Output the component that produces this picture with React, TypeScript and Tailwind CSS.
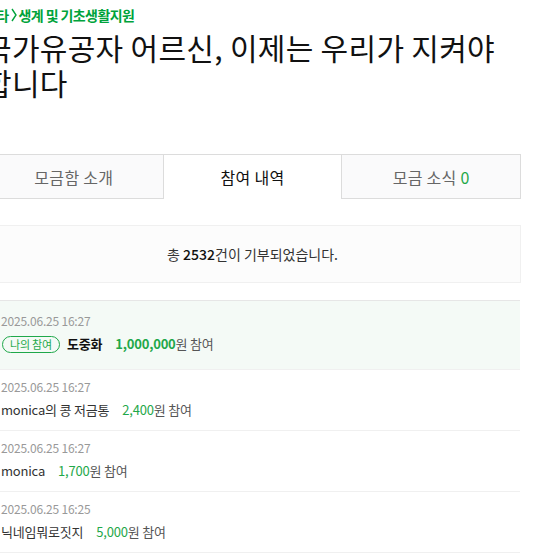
import React from 'react'

const rows = [
  { time: '2025.06.25 16:27', name: '도중화', amount: '1,000,000', mine: true },
  { time: '2025.06.25 16:27', name: 'monica의 콩 저금통', amount: '2,400', mine: false },
  { time: '2025.06.25 16:27', name: 'monica', amount: '1,700', mine: false },
  { time: '2025.06.25 16:25', name: '닉네임뭐로짓지', amount: '5,000', mine: false },
]

function App() {
  return (
    <div className="w-[560px] h-[560px] overflow-hidden bg-white" style={{ fontFamily: '"Noto Sans CJK KR", "Noto Sans", sans-serif' }}>
      <div className="ml-[-16px] w-[537px]">
        {/* breadcrumb */}
        <div className="pt-[5px] flex items-center text-[14px] leading-[20px] font-bold text-[#00a33b] tracking-[-0.6px]">
          기타
          <svg className="mx-[2px]" width="6" height="14" viewBox="0 0 6 14" fill="none">
            <path d="M1 1 L5 7 L1 13" stroke="#00a33b" strokeWidth="1.4" />
          </svg>
          생계 및 기초생활지원
        </div>
        {/* title */}
        <h1 className="mt-[5px] text-[30px] leading-[35px] text-[#111] tracking-[0.3px]">
          국가유공자 어르신, 이제는 우리가 지켜야 합니다
        </h1>

        {/* tabs */}
        <div className="mt-[54px] flex h-[45px]">
          <div className="flex-1 flex items-center justify-center bg-[#fafafb] border border-[#dcdcdc] text-[16px] text-[#666] tracking-[0.3px]">
            모금함 소개
          </div>
          <div className="flex-1 flex items-center justify-center bg-white border-t border-[#dcdcdc] text-[16px] text-[#111] tracking-[0.3px]">
            참여 내역
          </div>
          <div className="flex-1 flex items-center justify-center bg-[#fafafb] border border-[#dcdcdc] text-[16px] text-[#666] tracking-[0.3px]">
            모금 소식&nbsp;<span className="text-[#1fa84a]">0</span>
          </div>
        </div>

        {/* summary */}
        <div className="mt-[26px] h-[58px] flex items-center justify-center bg-[#fcfcfc] border border-[#f0f0f0] text-[14px] text-[#333]">
          총&nbsp;<span className="font-medium text-[#111]">2532</span>건이 기부되었습니다.
        </div>

        {/* list */}
        <ul className="mt-[17px] border-t border-[#e6e6e6] w-[536px]">
          {rows.map((r, i) => (
            <li
              key={i}
              className={
                r.mine
                  ? 'pl-[17px] pt-[11px] pb-[14px] bg-[#f4faf6] border-b border-[#f0f0f0]'
                  : 'pl-[17px] pt-[8px] pb-[9px] border-b border-[#f0f0f0]'
              }
            >
              <div className="text-[12px] leading-[18px] text-[#999] tracking-[-0.2px]">{r.time}</div>
              <div className="mt-[3px] flex items-center h-[22px] text-[13px] tracking-[-0.2px]">
                {r.mine && (
                  <span className="ml-[1px] mr-[7px] inline-flex items-center h-[17px] px-[7px] rounded-full border border-[#1fa84a] text-[11px] text-[#1fa84a]">
                    나의 참여
                  </span>
                )}
                <span className={r.mine ? 'font-bold text-[#111]' : 'text-[#333]'}>{r.name}</span>
                <span className={r.mine ? 'ml-[13px] font-bold text-[#1fa84a]' : 'ml-[13px] text-[#1fa84a]'}>{r.amount}</span>
                <span className="text-[#555]">원 참여</span>
              </div>
            </li>
          ))}
        </ul>
      </div>
    </div>
  )
}

export default App
